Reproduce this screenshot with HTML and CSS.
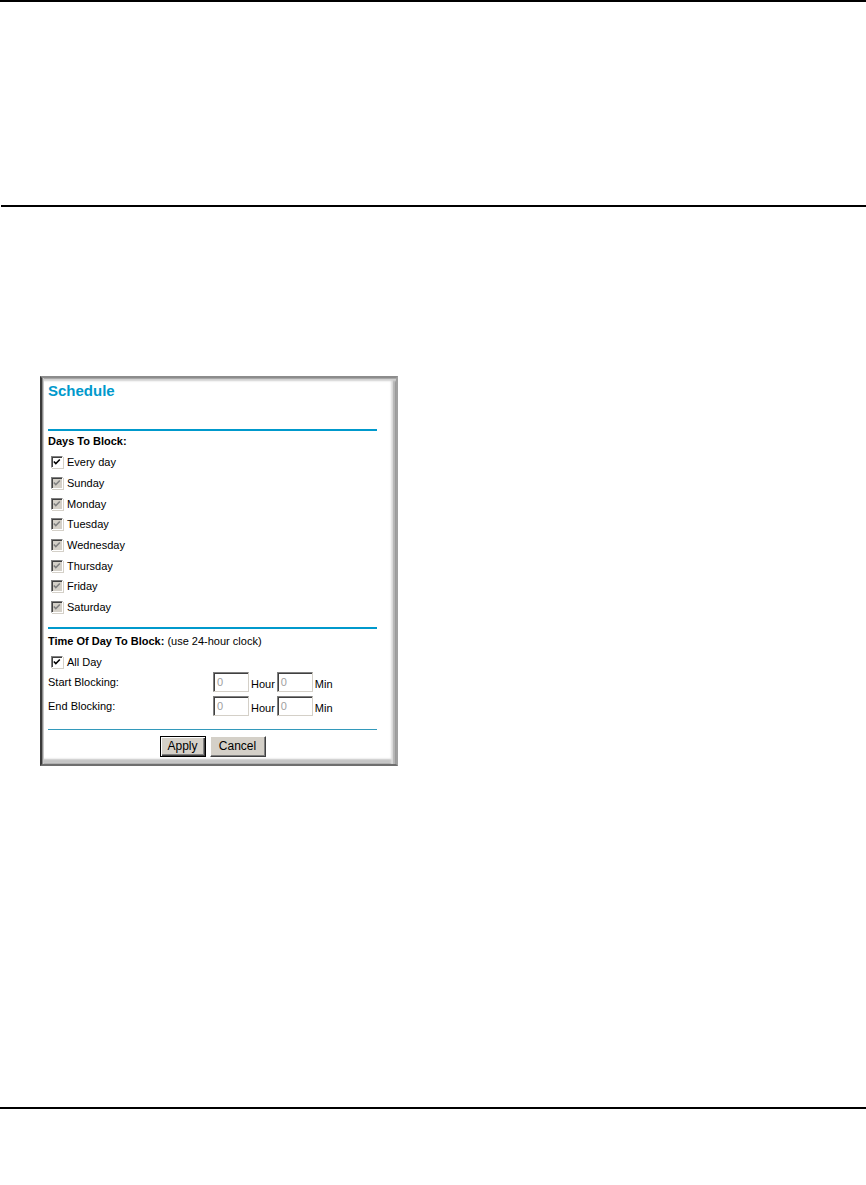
FILE: index.html
```html
<!DOCTYPE html>
<html>
<head>
    <title>Schedule</title>
    <meta http-equiv="Content-Type" content="text/html; charset=utf-8"/>
    <link rel="stylesheet" href="styles.css">
</head>
<body>
    <div class="rule rule-top"></div>
    <div class="rule rule-mid"></div>

    <div class="panel">
        <div class="title">Schedule</div>
        <div class="blue-line"></div>

        <div class="heading">Days To Block:</div>
        <div class="check-row"><span class="cb"><svg viewBox="0 0 11 11"><polyline points="2,5 4.2,7.3 8.6,2.8"/></svg></span>Every day</div>
        <div class="check-row"><span class="cb disabled"><svg viewBox="0 0 11 11"><polyline points="2,5 4.2,7.3 8.6,2.8"/></svg></span>Sunday</div>
        <div class="check-row"><span class="cb disabled"><svg viewBox="0 0 11 11"><polyline points="2,5 4.2,7.3 8.6,2.8"/></svg></span>Monday</div>
        <div class="check-row"><span class="cb disabled"><svg viewBox="0 0 11 11"><polyline points="2,5 4.2,7.3 8.6,2.8"/></svg></span>Tuesday</div>
        <div class="check-row"><span class="cb disabled"><svg viewBox="0 0 11 11"><polyline points="2,5 4.2,7.3 8.6,2.8"/></svg></span>Wednesday</div>
        <div class="check-row"><span class="cb disabled"><svg viewBox="0 0 11 11"><polyline points="2,5 4.2,7.3 8.6,2.8"/></svg></span>Thursday</div>
        <div class="check-row"><span class="cb disabled"><svg viewBox="0 0 11 11"><polyline points="2,5 4.2,7.3 8.6,2.8"/></svg></span>Friday</div>
        <div class="check-row"><span class="cb disabled"><svg viewBox="0 0 11 11"><polyline points="2,5 4.2,7.3 8.6,2.8"/></svg></span>Saturday</div>

        <div class="blue-line blue-line-2"></div>

        <div class="heading heading-time"><b>Time Of Day To Block:</b> (use 24-hour clock)</div>
        <div class="check-row allday"><span class="cb"><svg viewBox="0 0 11 11"><polyline points="2,5 4.2,7.3 8.6,2.8"/></svg></span>All Day</div>

        <div class="time-row">
            <span class="time-label">Start Blocking:</span>
            <span class="field">0</span><span class="unit">Hour</span>
            <span class="field">0</span><span class="unit">Min</span>
        </div>
        <div class="time-row time-row-2">
            <span class="time-label">End Blocking:</span>
            <span class="field">0</span><span class="unit">Hour</span>
            <span class="field">0</span><span class="unit">Min</span>
        </div>

        <div class="thin-line"></div>

        <div class="buttons">
            <span class="btn btn-default"><span class="btn-face">Apply</span></span>
            <span class="btn"><span class="btn-face">Cancel</span></span>
        </div>
    </div>

    <div class="rule rule-bottom"></div>
</body>
</html>
```

FILE: styles.css
```css
html {
    height: 100%;
}

body {
    margin: 0;
    padding: 0;
    background: #ffffff;
    font-family: 'Liberation Sans', Arial, sans-serif;
    font-size: 11px;
    color: #000000;
}

.rule {
    height: 2px;
    background: #000000;
}

.rule-mid {
    margin-top: 203px;
    margin-left: 1px;
}

.rule-bottom {
    margin-top: 341px;
}

/* panel with the grey bevelled frame */
.panel {
    box-sizing: border-box;
    width: 358px;
    height: 390px;
    margin: 169px 0 0 40px;
    padding: 5px 19px 0 6px;
    background: #ffffff;
    border-left: 2px solid #3a3a3a;
    border-top: 2px solid #8c8c8c;
    border-right: 2px solid #a0a0a0;
    border-bottom: 2px solid #6e6e6e;
    box-shadow: inset 1px 0 0 #8a8a8a,
                inset 2px 0 0 #c8c8c8,
                inset 0 1px 0 #a8a8a8,
                inset 0 3px 2px #d0d0d0,
                inset -1px 0 0 #888888,
                inset -3px 0 1px #b4b4b4,
                inset -5px 0 2px #dcdcdc,
                inset 0 -1px 0 #a0a0a0,
                inset 0 -5px 2px #c4c4c4;
}

.title {
    font-size: 15px;
    line-height: 16px;
    font-weight: bold;
    color: #0099cc;
    margin-bottom: 30px;
}

.blue-line {
    height: 2px;
    background: #0099cc;
}

.blue-line-2 {
    margin-top: 9px;
}

.heading {
    height: 21px;
    line-height: 21px;
    font-weight: bold;
}

.heading-time {
    height: 24px;
    line-height: 24px;
    font-weight: normal;
}

.check-row {
    display: flex;
    align-items: center;
    height: 20.7px;
    padding-left: 3px;
}

.check-row.allday {
    height: 19px;
}

.cb {
    box-sizing: border-box;
    display: inline-block;
    width: 12px;
    height: 12px;
    margin-right: 4px;
    background: #ffffff;
    border-top: 1px solid #808080;
    border-left: 1px solid #808080;
    border-bottom: 1px solid #ffffff;
    border-right: 1px solid #ffffff;
    box-shadow: inset 1px 1px 0 #404040, 1px 1px 0 #d4d0c8;
}

.cb svg {
    display: block;
    width: 10px;
    height: 10px;
}

.cb polyline {
    fill: none;
    stroke: #000000;
    stroke-width: 1.7;
}

.cb.disabled {
    background: #d4d0c8;
}

.cb.disabled polyline {
    stroke: #808080;
}

.time-row {
    display: flex;
    align-items: center;
    height: 20px;
}

.time-row-2 {
    margin-top: 4px;
}

.time-label {
    width: 165px;
}

.field {
    box-sizing: border-box;
    width: 36px;
    height: 20px;
    padding: 3px 0 0 3px;
    background: #ffffff;
    color: #a0a0a0;
    border-top: 1px solid #808080;
    border-left: 1px solid #808080;
    border-bottom: 1px solid #d4d0c8;
    border-right: 1px solid #d4d0c8;
    box-shadow: inset 1px 1px 0 #404040;
}

.unit {
    padding: 4px 2px 0 2px;
}

.thin-line {
    height: 1px;
    margin-top: 13px;
    background: #3399bb;
}

.buttons {
    display: flex;
    justify-content: center;
    gap: 4px;
    margin-top: 6px;
}

.btn {
    box-sizing: border-box;
    display: inline-block;
    height: 21px;
    width: 56px;
    background: #d4d0c8;
    border-top: 1px solid #ffffff;
    border-left: 1px solid #ffffff;
    border-bottom: 1px solid #404040;
    border-right: 1px solid #404040;
    box-shadow: inset -1px -1px 0 #808080;
    font-size: 12px;
}

.btn-default {
    width: 46px;
    border: 1px solid #000000;
    box-shadow: inset 1px 1px 0 #ffffff, inset -1px -1px 0 #404040, inset -2px -2px 0 #808080;
}

.btn-face {
    display: block;
    text-align: center;
    line-height: 18px;
}
```
